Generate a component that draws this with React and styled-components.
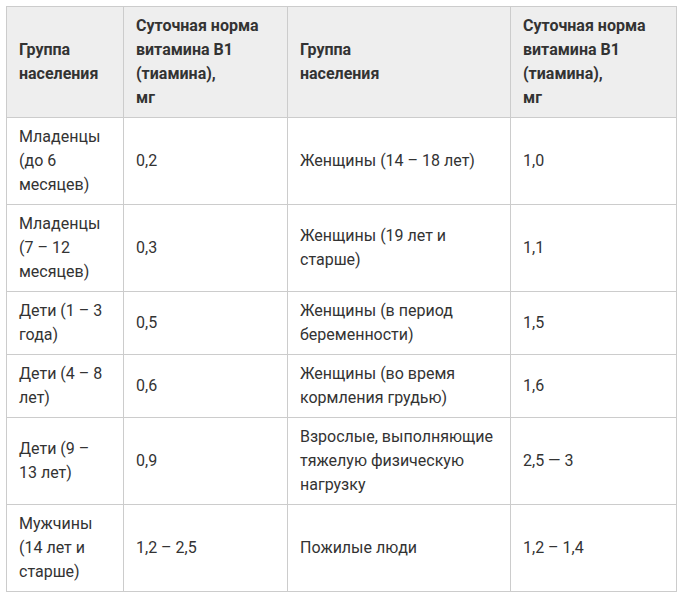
import React from "react";
import styled, { createGlobalStyle } from "styled-components";

const Global = createGlobalStyle`
  html, body { margin: 0; padding: 0; background: #fff; }
  body { padding: 6px; font-family: Roboto, "Noto Sans", Arial, sans-serif; }
`;

const Table = styled.table`
  border-collapse: collapse;
  width: 670px;
  table-layout: fixed;
  font-family: Roboto, "Noto Sans", Arial, sans-serif;
  font-size: 16px;
  line-height: 24px;
  color: #333;
`;

const Col = styled.col`
  width: ${(p) => p.$w}px;
`;

const Th = styled.th`
  background: #eeeeee;
  border: 1px solid #cccccc;
  padding: 7px 12px;
  text-align: left;
  vertical-align: middle;
  font-weight: 700;
`;

const Td = styled.td`
  border: 1px solid #cccccc;
  padding: 7px 12px;
  text-align: left;
  vertical-align: middle;
  font-weight: 400;
`;

const widths = [117, 164, 223, 166];

const GroupHead = () => (
  <Th>
    Группа
    <br />
    населения
  </Th>
);

const NormHead = () => (
  <Th>
    Суточная норма
    <br />
    витамина В1
    <br />
    (тиамина),
    <br />
    мг
  </Th>
);

const rows = [
  ["Младенцы (до 6 месяцев)", "0,2", "Женщины (14 – 18 лет)", "1,0"],
  ["Младенцы (7 – 12 месяцев)", "0,3", "Женщины (19 лет и старше)", "1,1"],
  ["Дети (1 – 3 года)", "0,5", "Женщины (в период беременности)", "1,5"],
  ["Дети (4 – 8 лет)", "0,6", "Женщины (во время кормления грудью)", "1,6"],
  ["Дети (9 – 13 лет)", "0,9", "Взрослые, выполняющие тяжелую физическую нагрузку", "2,5 — 3"],
  ["Мужчины (14 лет и старше)", "1,2 – 2,5", "Пожилые люди", "1,2 – 1,4"],
];

export default function App() {
  return (
    <>
      <Global />
      <Table>
        <colgroup>
          {widths.map((w, i) => (
            <Col key={i} $w={w} />
          ))}
        </colgroup>
        <thead>
          <tr>
            <GroupHead />
            <NormHead />
            <GroupHead />
            <NormHead />
          </tr>
        </thead>
        <tbody>
          {rows.map((r, i) => (
            <tr key={i}>
              {r.map((c, j) => (
                <Td key={j}>{c}</Td>
              ))}
            </tr>
          ))}
        </tbody>
      </Table>
    </>
  );
}
